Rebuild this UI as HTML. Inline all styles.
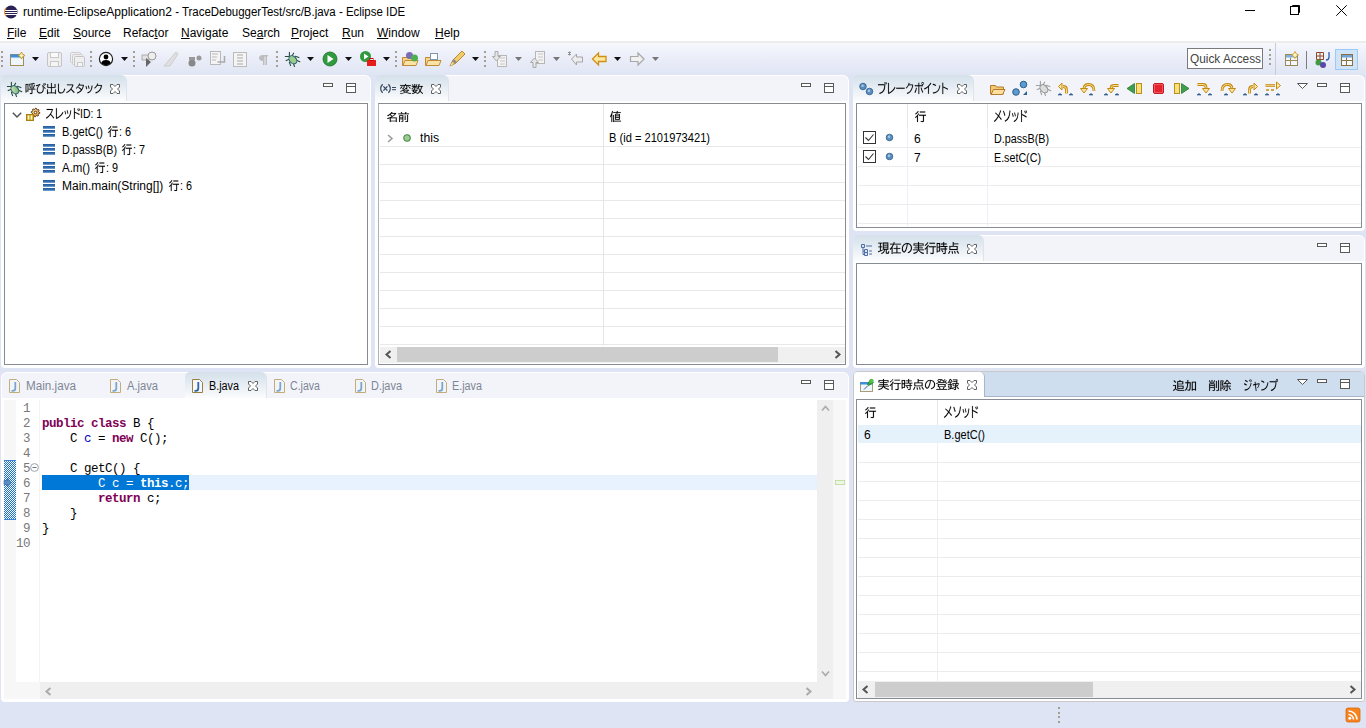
<!DOCTYPE html>
<html><head><meta charset="utf-8">
<style>
*{margin:0;padding:0;box-sizing:border-box}
html,body{width:1366px;height:728px;overflow:hidden}
body{position:relative;background:#dfe4f4;font-family:"Liberation Sans",sans-serif;font-size:12px;color:#000}
.a{position:absolute}
.t{position:absolute;white-space:pre}
u{text-decoration:underline}
.pn{position:absolute;background:#fff;border-radius:6px 6px 4px 4px}
.hd{position:absolute;left:1px;right:1px;top:1px;height:25px;background:#f3f4f9;border-radius:5px 5px 0 0}
.tab{position:absolute;top:0;height:26px;background:linear-gradient(#d4e0ea 0%,#e3ebf2 40%,#fbfcfd 100%);border-radius:5px 6px 0 0;border-right:1px solid #dfe3ea}
.cb{position:absolute;border:1px solid #878b93;background:#fff}
.gl{position:absolute;height:1px;background:#ededed}
.vl{position:absolute;width:1px;background:#ededed}
.code{position:absolute;font-family:"Liberation Mono",monospace;font-size:12.5px;letter-spacing:-0.5px;line-height:15px;white-space:pre;color:#000}
.k{color:#7f0055;font-weight:bold}
.f{color:#0000c0}
.ln{position:absolute;font-family:"Liberation Mono",monospace;font-size:12.5px;letter-spacing:-0.5px;line-height:15px;color:#787878;white-space:pre}
svg{position:absolute;overflow:visible}
</style></head><body>
<svg width="0" height="0" style="left:0;top:0">
<defs>
<path id="xcl" d="M0.5 0.5H3L5 2.5L7 0.5H9.5V3L7.5 5L9.5 7V9.5H7L5 7.5L3 9.5H0.5V7L2.5 5L0.5 3Z" fill="#fff" stroke="#505050" stroke-width="0.9"/>
<g id="mnx"><rect x="0.5" y="0.5" width="9" height="3" fill="#fff" stroke="#5a5a5a"/></g>
<g id="mxx"><rect x="0.5" y="0.5" width="9" height="9" fill="#fff" stroke="#5a5a5a"/><path d="M0.5 3.5h9" stroke="#5a5a5a"/></g>
<g id="jf"><path d="M0.5 0.5h7l3 3v10h-10z" fill="#f1f5fa" stroke="#c2ad78"/><path d="M6.3 3v6.2q0 2.6-2.6 2.6h-1.2" stroke="#7ea3cc" stroke-width="1.8" fill="none"/></g>
<g id="jfa"><path d="M0.5 0.5h7l3 3v10h-10z" fill="#f4f7fb" stroke="#9b7f3e"/><path d="M6.3 3v6.2q0 2.6-2.6 2.6h-1.2" stroke="#2f64a8" stroke-width="1.8" fill="none"/></g>
<linearGradient id="fg" x1="0" y1="0" x2="0" y2="1"><stop offset="0" stop-color="#1d5a9c"/><stop offset="0.6" stop-color="#3a72b0"/><stop offset="1" stop-color="#8fb1d8"/></linearGradient><g id="frame"><rect x="0" y="0" width="12" height="3" fill="url(#fg)"/><rect x="0" y="4" width="12" height="3" fill="url(#fg)"/><rect x="0" y="8" width="12" height="3" fill="url(#fg)"/></g>
<g id="chk"><rect x="0.5" y="0.5" width="12" height="12" fill="#fff" stroke="#333"/><path d="M2.5 6.5l3 3 5-6" stroke="#333" stroke-width="1.1" fill="none"/></g>
<g id="bdot"><circle cx="3.5" cy="3.5" r="3.3" fill="#5b8fc0" stroke="#2d5d8c" stroke-width="0.8"/><circle cx="3" cy="2.8" r="1.2" fill="#a8c8e6"/></g>
</defs>
</svg>

<!-- title bar -->
<div class="a" style="left:0;top:0;width:1366px;height:43px;background:#fff"></div>
<svg style="left:4px;top:5px" width="14" height="14" viewBox="0 0 14 14"><circle cx="7" cy="7" r="6.5" fill="#2c2255"/><rect x="1" y="5" width="12" height="1" fill="#fff"/><rect x="1" y="7" width="12" height="1" fill="#fff"/><rect x="1" y="9" width="12" height="1" fill="#fff"/><path d="M2 3 A6.5 6.5 0 0 0 2 11" stroke="#f7941e" stroke-width="1" fill="none"/></svg>
<div class="a" style="left:1245px;top:10px;width:10px;height:1px;background:#000"></div>
<svg style="left:1289px;top:3px" width="13" height="13"><rect x="1.5" y="3.5" width="8" height="8" fill="none" stroke="#000"/><path d="M3.5 3.5V2.5H10.5V9.5H9.5" fill="none" stroke="#000"/></svg>
<svg style="left:1336px;top:5px" width="11" height="11"><path d="M0.3 0.3L10.7 10.7M10.7 0.3L0.3 10.7" stroke="#000" stroke-width="1"/></svg>

<!-- toolbar -->
<div class="a" style="left:0;top:41px;width:1366px;height:2px;background:#ececec"></div>
<div class="a" style="left:0;top:43px;width:1366px;height:32px;background:linear-gradient(#f6f8fc,#eef1fa 30%,#e0e5f4)"></div>
<svg style="left:0;top:43px" width="1366" height="30" viewBox="0 43 1366 30">
<defs>
<g id="grip"><rect x="0" y="0" width="2" height="2" fill="#a69e8e"/><rect x="0" y="5" width="2" height="2" fill="#a69e8e"/><rect x="0" y="9" width="2" height="2" fill="#a69e8e"/><rect x="0" y="14" width="2" height="2" fill="#a69e8e"/></g>
<path id="dd" d="M0 0h7l-3.5 4z"/>
</defs>
<use href="#grip" x="1" y="51"/>
<!-- new -->
<rect x="10.5" y="54.5" width="13" height="11" fill="#eef6fd" stroke="#a58c53"/>
<rect x="10.5" y="54.5" width="13" height="3" fill="#3d8ed6"/>
<path d="M21.5 52 l1.2 2.3 2.3 1.2 -2.3 1.2 -1.2 2.3 -1.2 -2.3 -2.3 -1.2 2.3 -1.2z" fill="#fff3c4" stroke="#c79c2b" stroke-width="1"/>
<use href="#dd" x="32" y="57" fill="#111"/>
<!-- save -->
<rect x="47.5" y="52.5" width="14" height="14" rx="1.5" fill="#efefef" stroke="#c4c4c4"/>
<rect x="50.5" y="52.5" width="8" height="5" fill="#fafafa" stroke="#c8c8c8"/>
<rect x="50.5" y="61.5" width="8" height="5" fill="#f4f4f4" stroke="#c8c8c8"/>
<!-- save all -->
<rect x="70.5" y="52.5" width="10" height="10" rx="1" fill="#efefef" stroke="#cdcdcd"/>
<rect x="72.5" y="54.5" width="10" height="10" rx="1" fill="#efefef" stroke="#cdcdcd"/>
<rect x="74.5" y="56.5" width="10" height="10" rx="1" fill="#efefef" stroke="#c4c4c4"/>
<rect x="77.5" y="62.5" width="5" height="4" fill="#f4f4f4" stroke="#c8c8c8"/>
<use href="#grip" x="90" y="51"/>
<!-- profile -->
<circle cx="106" cy="59" r="6.6" fill="#fff" stroke="#222" stroke-width="1.2"/>
<circle cx="106" cy="57" r="2.4" fill="#000"/>
<path d="M101.2 63.3 Q102 60 106 60 Q110 60 110.8 63.3 Q106 67 101.2 63.3z" fill="#000"/>
<use href="#dd" x="121" y="57" fill="#111"/>
<use href="#grip" x="133" y="51"/>
<!-- disabled icons -->
<path d="M142 55h7v5h-7z" fill="#e2e2e2" stroke="#aaa"/>
<circle cx="152" cy="56" r="4" fill="#eee" stroke="#999"/>
<path d="M146 58v9l5-5z" fill="#666"/>
<path d="M164 66 L176 52 L178 54 L170 66z" fill="#e0e0e0" stroke="#ccc"/>
<circle cx="192" cy="63" r="3.5" fill="#888"/>
<path d="M189 57h6v3h-6z" fill="#999"/><circle cx="199" cy="58" r="2.5" fill="#999"/>
<rect x="210.5" y="51.5" width="10" height="13" fill="#f4f4f4" stroke="#b9b9b9"/>
<path d="M212 54h6M212 57h5M212 60h4" stroke="#bbb"/>
<path d="M224.5 56v6h-7" stroke="#aaa" stroke-width="1.5" fill="none"/>
<rect x="233.5" y="52.5" width="13" height="14" fill="#f4f4f4" stroke="#bbb"/>
<path d="M237 55h6M237 58h6M237 61h6M237 64h6" stroke="#aaa"/>
<path d="M263 55H268V56.5H267V65H265.5V56.5H264.5V65H263V61Q259 61 259 58Q259 55 263 55Z" fill="#bdbdbd"/>
<use href="#grip" x="276" y="51"/>
<!-- bug -->
<g transform="translate(285 52)">
<g stroke="#2b4a3c" stroke-width="1.1" stroke-linecap="round"><path d="M4.4 0.4V3.8M8.6 1.2L7.3 3.6M0.3 4.5H3.6M10.3 4.3L13.9 5.6M1.2 8.6L3.8 7.6M12.1 8.4L14.8 9.8M4.4 10.2L5.6 13.6M8.6 12.1L9.5 14.5"/></g>
<ellipse cx="7.9" cy="7.8" rx="3.3" ry="4.6" fill="#9ccb8c" stroke="#1d5b70" stroke-width="1" transform="rotate(-42 7.9 7.8)"/>
</g>
<use href="#dd" x="307" y="57" fill="#111"/>
<!-- run -->
<circle cx="330" cy="59" r="7" fill="#2f9a3e"/>
<circle cx="330" cy="59" r="7" fill="none" stroke="#1b6e2a" stroke-width="0.8"/>
<path d="M327.5 55v8l6-4z" fill="#fff"/>
<use href="#dd" x="345" y="57" fill="#111"/>
<!-- run ext -->
<circle cx="365.5" cy="56.5" r="5.5" fill="#2f9a3e"/>
<path d="M364 53.5v6l4.5-3z" fill="#fff"/>
<rect x="367" y="60" width="9" height="6" fill="#e51d1d"/>
<rect x="370" y="58.5" width="3" height="2" fill="none" stroke="#c00" />
<use href="#dd" x="383" y="57" fill="#111"/>
<use href="#grip" x="395" y="51"/>
<!-- open type -->
<path d="M402.5 57.5h5l1 1h6v7h-12z" fill="#f7d489" stroke="#c08a35"/>
<path d="M403 65.5l2-5h13l-2 5z" fill="#fbe3a6" stroke="#c08a35"/>
<circle cx="409.5" cy="55.5" r="3.5" fill="#7a6bb7"/>
<circle cx="414.5" cy="58" r="3.5" fill="#4fae50"/>
<!-- open folder -->
<path d="M425.5 57.5h5l1 1h6v7h-12z" fill="#f7d489" stroke="#c08a35"/>
<rect x="430.5" y="53.5" width="7" height="6" fill="#fff" stroke="#7f96b4"/>
<path d="M426 65.5l2-5h13l-2 5z" fill="#fbe3a6" stroke="#c08a35"/>
<!-- pen -->
<path d="M450 66 l3-6 9-9 3 3 -9 9z" fill="#f2cb6a" stroke="#b88830"/>
<path d="M453 60 l3 3" stroke="#8c8c8c" stroke-width="2.5"/>
<path d="M450 66l2-3 1 1z" fill="#fff8d0"/>
<use href="#dd" x="472" y="57" fill="#111"/>
<use href="#grip" x="484" y="51"/>
<!-- down to list -->
<rect x="497.5" y="55.5" width="9" height="11" fill="#f3f3f3" stroke="#b7b7b7"/>
<path d="M500 58h5M500 61h5M500 64h5" stroke="#c6c6c6"/>
<path d="M495 51.5h3v5h2.5l-4 4.5-4-4.5h2.5z" fill="#e6e6e6" stroke="#a9a9a9"/>
<use href="#dd" x="515" y="57" fill="#777"/>
<rect x="535.5" y="51.5" width="9" height="12" fill="#f3f3f3" stroke="#b7b7b7"/>
<path d="M538 54h5M538 57h5M538 60h5" stroke="#c6c6c6"/>
<path d="M533 67.5h3v-5h2.5l-4-4.5-4 4.5h2.5z" fill="#e6e6e6" stroke="#a9a9a9"/>
<use href="#dd" x="553" y="57" fill="#777"/>
<!-- back with star -->
<path d="M571.5 59l5-5v3h6v5h-6v3z" fill="#ededed" stroke="#a5a5a5"/>
<path d="M568 52l3 3M571 52l-3 3M569.5 51.5v4" stroke="#888" stroke-width="0.9"/>
<!-- back gold -->
<path d="M592.5 59l6-6v3.5h7.5v5h-7.5v3.5z" fill="#fde8a1" stroke="#d18f12" stroke-width="1.3"/>
<use href="#dd" x="614" y="57" fill="#111"/>
<!-- forward gray -->
<path d="M644 59l-6-6v3.5h-7.5v5h7.5v3.5z" fill="#f1f1f1" stroke="#a8a8a8" stroke-width="1.2"/>
<use href="#dd" x="652" y="57" fill="#777"/>
<!-- right side -->
<rect x="1187.5" y="48.5" width="75" height="20" fill="#fff" stroke="#7a7a7a"/>
<use href="#grip" x="1269" y="49"/>
<rect x="1275" y="43" width="1" height="32" fill="#c9ccd6"/>
<rect x="1285.5" y="54.5" width="12" height="11" fill="#f4f7fb" stroke="#9a8a5a"/>
<rect x="1286" y="55" width="11" height="2.5" fill="#7fb0e0"/>
<path d="M1285.5 60.5h12M1290.5 57.5v8" stroke="#9a8a5a"/>
<path d="M1295 51.5l1.3 2.2 2.2 1.3-2.2 1.3-1.3 2.2-1.3-2.2-2.2-1.3 2.2-1.3z" fill="#fff3c4" stroke="#c89a2c" stroke-width="0.9"/>
<rect x="1306" y="51" width="1" height="18" fill="#7c7c7c"/>
<path d="M1316.5 52.5h7v7h-7z M1320 52.5v7 M1316.5 56h7" stroke="#8b4a2a" fill="none" stroke-width="1"/>
<circle cx="1318.5" cy="62.5" r="3" fill="#3f9a45"/><circle cx="1323" cy="65" r="3" fill="#5a48a8"/>
<path d="M1329 52v5q0 3-3 3" stroke="#2b5fb0" stroke-width="1.3" fill="none"/>
<rect x="1335.5" y="49.5" width="22" height="20" fill="#cfe4f9" stroke="#9ccaf2"/>
<rect x="1341.5" y="54.5" width="11" height="11" fill="#f6f9fc" stroke="#8a7040"/>
<rect x="1342" y="55" width="10" height="2.5" fill="#6fa3da"/>
<path d="M1341.5 60.5h11M1346.5 57.5v8" stroke="#8a7040"/>
</svg>

<!-- ===== Call stack panel ===== -->
<div class="pn" style="left:1px;top:75px;width:370px;height:293px">
  <div class="hd"></div>
  <div class="tab" style="left:0;width:126px"></div>
  <div class="cb" style="left:3px;top:28px;width:364px;height:262px"></div>
</div>
<svg style="left:7px;top:82px" width="16" height="16" viewBox="0 0 16 16">
<defs><linearGradient id="bugg" x1="0" y1="0" x2="1" y2="1"><stop offset="0" stop-color="#d8efcb"/><stop offset="1" stop-color="#6fa85e"/></linearGradient></defs>
<g stroke="#2b4a3c" stroke-width="1.1" stroke-linecap="round"><path d="M4.4 0.4V3.8M8.6 1.2L7.3 3.6M0.3 4.5H3.6M10.3 4.3L13.9 5.6M1.2 8.6L3.8 7.6M12.1 8.4L14.8 9.8M4.4 10.2L5.6 13.6M8.6 12.1L9.5 14.5"/></g>
<ellipse cx="7.9" cy="7.8" rx="3.3" ry="4.6" fill="url(#bugg)" stroke="#1d5b70" stroke-width="1" transform="rotate(-42 7.9 7.8)"/>
</svg>
<svg style="left:110px;top:84px" width="10" height="10"><use href="#xcl"/></svg>
<svg style="left:323px;top:83px" width="11" height="5"><use href="#mnx"/></svg>
<svg style="left:346px;top:83px" width="11" height="11"><use href="#mxx"/></svg>
<svg style="left:12px;top:112px" width="10" height="6"><path d="M0.8 0.8l4.2 4.2 4.2-4.2" stroke="#555" stroke-width="1.5" fill="none"/></svg>
<svg style="left:26px;top:107px" width="15" height="15">
<defs><linearGradient id="gg" x1="0" y1="0" x2="1" y2="1"><stop offset="0" stop-color="#fff2a0"/><stop offset="1" stop-color="#f0a020"/></linearGradient></defs>
<path d="M9.50 1.20 L10.34 1.28 L10.72 2.54 L11.28 2.84 L12.54 2.46 L13.08 3.11 L12.46 4.28 L12.64 4.88 L13.80 5.50 L13.72 6.34 L12.46 6.72 L12.16 7.28 L12.54 8.54 L11.89 9.08 L10.72 8.46 L10.12 8.64 L9.50 9.80 L8.66 9.72 L8.28 8.46 L7.72 8.16 L6.46 8.54 L5.92 7.89 L6.54 6.72 L6.36 6.12 L5.20 5.50 L5.28 4.66 L6.54 4.28 L6.84 3.72 L6.46 2.46 L7.11 1.92 L8.28 2.54 L8.88 2.36Z" fill="url(#gg)" stroke="#4a2414" stroke-width="0.9"/>
<circle cx="9.5" cy="5.5" r="1.3" fill="#fff" stroke="#4a2414" stroke-width="0.9"/>
<rect x="0.5" y="7.5" width="7" height="6" fill="#c49a1c" stroke="#a8800e"/>
<rect x="1.6" y="8.4" width="1.8" height="4.2" fill="#fff6c0"/><rect x="4.6" y="8.4" width="1.8" height="4.2" fill="#fff6c0"/>
</svg>
<svg style="left:43px;top:126px" width="13" height="13"><use href="#frame"/></svg>
<svg style="left:43px;top:144px" width="13" height="13"><use href="#frame"/></svg>
<svg style="left:43px;top:162px" width="13" height="13"><use href="#frame"/></svg>
<svg style="left:43px;top:180px" width="13" height="13"><use href="#frame"/></svg>

<!-- ===== Variables panel ===== -->
<div class="pn" style="left:375px;top:75px;width:474px;height:293px">
  <div class="hd"></div>
  <div class="tab" style="left:0;width:74px"></div>
  <div class="cb" style="left:3px;top:28px;width:468px;height:262px;border-left-color:#adb0b7"></div>
</div>
<div class='a' style='left:603px;top:104px;width:1px;height:242px;background:#e6e6e6;'></div>
<div class='a' style='left:380px;top:146px;width:465px;height:1px;background:#e8e8e8;'></div>
<div class='a' style='left:380px;top:164px;width:465px;height:1px;background:#e8e8e8;'></div>
<div class='a' style='left:380px;top:182px;width:465px;height:1px;background:#e8e8e8;'></div>
<div class='a' style='left:380px;top:200px;width:465px;height:1px;background:#e8e8e8;'></div>
<div class='a' style='left:380px;top:218px;width:465px;height:1px;background:#e8e8e8;'></div>
<div class='a' style='left:380px;top:236px;width:465px;height:1px;background:#e8e8e8;'></div>
<div class='a' style='left:380px;top:254px;width:465px;height:1px;background:#e8e8e8;'></div>
<div class='a' style='left:380px;top:272px;width:465px;height:1px;background:#e8e8e8;'></div>
<div class='a' style='left:380px;top:290px;width:465px;height:1px;background:#e8e8e8;'></div>
<div class='a' style='left:380px;top:308px;width:465px;height:1px;background:#e8e8e8;'></div>
<div class='a' style='left:380px;top:326px;width:465px;height:1px;background:#e8e8e8;'></div>
<div class='a' style='left:380px;top:344px;width:465px;height:1px;background:#e8e8e8;'></div>
<div class='a' style='left:380px;top:347px;width:465px;height:16px;background:#f0f0f0;'></div>
<div class='a' style='left:397px;top:347px;width:381px;height:15px;background:#cdcdcd;'></div>
<svg style='left:385px;top:350px' width='7' height='9'><path d='M5.5 1l-4 3.5 4 3.5' stroke='#555' stroke-width='2' fill='none'/></svg>
<svg style='left:834px;top:350px' width='7' height='9'><path d='M1.5 1l4 3.5-4 3.5' stroke='#555' stroke-width='2' fill='none'/></svg>
<svg style="left:0;top:0" width="1" height="1"><g stroke="#34455f" fill="none"><path d="M382.6 84.2Q378.6 88.5 382.6 92.8" stroke-width="1.25"/><path d="M388.4 84.2Q392.4 88.5 388.4 92.8" stroke-width="1.25"/><path d="M383.4 86.3L387.4 90.7M387.4 86.3L383.4 90.7" stroke-width="1.25"/><path d="M392 87.5h4M392 89.7h4" stroke-width="1"/></g></svg>
<svg style="left:431px;top:84px" width="10" height="10"><use href="#xcl"/></svg>
<svg style="left:801px;top:83px" width="11" height="5"><use href="#mnx"/></svg>
<svg style="left:824px;top:83px" width="11" height="11"><use href="#mxx"/></svg>
<svg style="left:387px;top:134px" width="7" height="9"><path d="M1 1l4 3.5-4 3.5" stroke="#9a9a9a" stroke-width="1.5" fill="none"/></svg>
<svg style="left:403px;top:134px" width="8" height="8"><circle cx="4" cy="4" r="3.2" fill="#9fcc8f" stroke="#3d8a46" stroke-width="1.1"/></svg>

<!-- ===== Breakpoints panel ===== -->
<div class="pn" style="left:853px;top:75px;width:512px;height:156px">
  <div class="hd"></div>
  <div class="tab" style="left:0;width:121px"></div>
  <div class="cb" style="left:3px;top:28px;width:506px;height:125px"></div>
</div>
<div class='a' style='left:907px;top:104px;width:1px;height:24px;background:#e6e6e6;'></div>
<div class='a' style='left:987px;top:104px;width:1px;height:24px;background:#e6e6e6;'></div>
<div class='a' style='left:907px;top:128px;width:1px;height:98px;background:#e9f0f8;'></div>
<div class='a' style='left:987px;top:128px;width:1px;height:98px;background:#e9f0f8;'></div>
<div class='a' style='left:858px;top:147px;width:503px;height:1px;background:#ececec;'></div>
<div class='a' style='left:858px;top:166px;width:503px;height:1px;background:#ececec;'></div>
<div class='a' style='left:858px;top:185px;width:503px;height:1px;background:#ececec;'></div>
<div class='a' style='left:858px;top:204px;width:503px;height:1px;background:#ececec;'></div>
<div class='a' style='left:858px;top:223px;width:503px;height:1px;background:#ececec;'></div>
<svg style="left:859px;top:82px" width="15" height="14"><use href="#bdot" x="0" y="0" transform="translate(0.5 1)"/><use href="#bdot" transform="translate(7 6)"/></svg>
<svg style="left:957px;top:84px" width="10" height="10"><use href="#xcl"/></svg>
<svg style='left:0;top:0' width='1366' height='728'><path d='M990.5 85.5h5l1 1.5h7v7h-13z' fill='#f3c874' stroke='#b47c2a'/><path d='M991 94.5l2.5-5h11.5l-2.5 5z' fill='#fbe0a0' stroke='#b47c2a'/><circle cx='1023.5' cy='84.5' r='3.3' fill='#5b9bd0' stroke='#2c5f8e'/><circle cx='1016' cy='92' r='3.3' fill='#5b9bd0' stroke='#2c5f8e'/><path d='M1027 91v4h-4z' fill='#2c5f8e'/><g transform='translate(1036 81)'><g stroke='#a0a0a0' stroke-width='1.1' stroke-linecap='round'><path d='M4.4 0.4V3.8M8.6 1.2L7.3 3.6M0.3 4.5H3.6M10.3 4.3L13.9 5.6M1.2 8.6L3.8 7.6M12.1 8.4L14.8 9.8M4.4 10.2L5.6 13.6M8.6 12.1L9.5 14.5'/></g><ellipse cx='7.9' cy='7.8' rx='3.3' ry='4.6' fill='#dcdcdc' stroke='#8c8c8c' stroke-width='1' transform='rotate(-42 7.9 7.8)'/></g><path d='M1066.5 93.5V89.5Q1066.5 86.5 1063 86.5' stroke='#c58a12' stroke-width='2.8' fill='none' stroke-linejoin='round'/><path d='M1066.5 93.5V89.5Q1066.5 86.5 1063 86.5' stroke='#fde7a0' stroke-width='0.9' fill='none' stroke-linejoin='round'/><path d='M1058.5 86.5l3.5-3.5v7z' fill='#fde7a0' stroke='#c58a12' stroke-width='1' stroke-linejoin='round'/><path d='M1058 95q2-3 4 0z' fill='#2f5b8c' stroke='#2f5b8c' stroke-width='0.6'/><path d='M1069 95q2-3 4 0z' fill='#2f5b8c' stroke='#2f5b8c' stroke-width='0.6'/><path d='M1094 91Q1094 84.5 1088.5 84.5Q1084 84.5 1084 89' stroke='#c58a12' stroke-width='2.8' fill='none' stroke-linejoin='round'/><path d='M1094 91Q1094 84.5 1088.5 84.5Q1084 84.5 1084 89' stroke='#fde7a0' stroke-width='0.9' fill='none' stroke-linejoin='round'/><path d='M1080.5 88.5h7l-3.5 4.5z' fill='#fde7a0' stroke='#c58a12' stroke-width='1' stroke-linejoin='round'/><path d='M1089 95q2-3 4 0z' fill='#2f5b8c' stroke='#2f5b8c' stroke-width='0.6'/><path d='M1118.5 85.5H1114Q1111 85.5 1111 88.5V89' stroke='#c58a12' stroke-width='2.8' fill='none' stroke-linejoin='round'/><path d='M1118.5 85.5H1114Q1111 85.5 1111 88.5V89' stroke='#fde7a0' stroke-width='0.9' fill='none' stroke-linejoin='round'/><path d='M1107.5 88.5h7l-3.5 4.5z' fill='#fde7a0' stroke='#c58a12' stroke-width='1' stroke-linejoin='round'/><path d='M1104 95q2-3 4 0z' fill='#2f5b8c' stroke='#2f5b8c' stroke-width='0.6'/><path d='M1115 95q2-3 4 0z' fill='#2f5b8c' stroke='#2f5b8c' stroke-width='0.6'/><path d='M1127 88.5l7.5-5v10z' fill='#3e9f4a' stroke='#2a7a35' stroke-width='0.8'/><rect x='1136.5' y='83.5' width='5' height='10' fill='#fbe07a' stroke='#b8901e'/><rect x='1153.5' y='83.5' width='10' height='10' rx='1.5' fill='#e5222d' stroke='#c21a24'/><rect x='1154.5' y='84.5' width='8' height='8' fill='none' stroke='#f46d74' stroke-width='0.7'/><rect x='1174.5' y='83.5' width='5' height='10' fill='#fbe07a' stroke='#b8901e'/><path d='M1181.5 83.5l7.5 5-7.5 5z' fill='#3e9f4a' stroke='#2a7a35' stroke-width='0.8'/><path d='M1197.5 84.5H1203Q1206 84.5 1206 87.5V89' stroke='#c58a12' stroke-width='2.8' fill='none' stroke-linejoin='round'/><path d='M1197.5 84.5H1203Q1206 84.5 1206 87.5V89' stroke='#fde7a0' stroke-width='0.9' fill='none' stroke-linejoin='round'/><path d='M1202.5 88.5h7l-3.5 4.5z' fill='#fde7a0' stroke='#c58a12' stroke-width='1' stroke-linejoin='round'/><path d='M1197 95q2-3 4 0z' fill='#2f5b8c' stroke='#2f5b8c' stroke-width='0.6'/><path d='M1208 95q2-3 4 0z' fill='#2f5b8c' stroke='#2f5b8c' stroke-width='0.6'/><path d='M1222 91Q1222 84.5 1227.5 84.5Q1232 84.5 1232 89' stroke='#c58a12' stroke-width='2.8' fill='none' stroke-linejoin='round'/><path d='M1222 91Q1222 84.5 1227.5 84.5Q1232 84.5 1232 89' stroke='#fde7a0' stroke-width='0.9' fill='none' stroke-linejoin='round'/><path d='M1228.5 88.5h7l-3.5 4.5z' fill='#fde7a0' stroke='#c58a12' stroke-width='1' stroke-linejoin='round'/><path d='M1224 95q2-3 4 0z' fill='#2f5b8c' stroke='#2f5b8c' stroke-width='0.6'/><path d='M1249.5 93.5V89.5Q1249.5 86.5 1253 86.5' stroke='#c58a12' stroke-width='2.8' fill='none' stroke-linejoin='round'/><path d='M1249.5 93.5V89.5Q1249.5 86.5 1253 86.5' stroke='#fde7a0' stroke-width='0.9' fill='none' stroke-linejoin='round'/><path d='M1257.5 86.5l-3.5-3.5v7z' fill='#fde7a0' stroke='#c58a12' stroke-width='1' stroke-linejoin='round'/><path d='M1243 95q2-3 4 0z' fill='#2f5b8c' stroke='#2f5b8c' stroke-width='0.6'/><path d='M1254 95q2-3 4 0z' fill='#2f5b8c' stroke='#2f5b8c' stroke-width='0.6'/><path d='M1265.5 85.5H1275' stroke='#c58a12' stroke-width='2.6' fill='none' stroke-linejoin='round'/><path d='M1265.5 85.5H1275' stroke='#fde7a0' stroke-width='0.7' fill='none' stroke-linejoin='round'/><path d='M1280.5 85.5l-4-3.5v7z' fill='#fde7a0' stroke='#c58a12' stroke-width='1' stroke-linejoin='round'/><path d='M1266 90h3M1271 90h3' stroke='#c58a12' stroke-width='1.6'/><path d='M1265 95q2-3 4 0z' fill='#2f5b8c' stroke='#2f5b8c' stroke-width='0.6'/><path d='M1276 95q2-3 4 0z' fill='#2f5b8c' stroke='#2f5b8c' stroke-width='0.6'/></svg>
<svg style="left:1297px;top:83px" width="11" height="6"><path d="M0.5 0.5h10l-5 5z" fill="#fff" stroke="#555"/></svg>
<svg style="left:1317px;top:83px" width="11" height="5"><use href="#mnx"/></svg>
<svg style="left:1340px;top:83px" width="11" height="11"><use href="#mxx"/></svg>
<svg style="left:863px;top:131px" width="13" height="13"><use href="#chk"/></svg>
<svg style="left:863px;top:150px" width="13" height="13"><use href="#chk"/></svg>
<svg style="left:886px;top:134px" width="8" height="8"><use href="#bdot"/></svg>
<svg style="left:886px;top:153px" width="8" height="8"><use href="#bdot"/></svg>

<!-- ===== Current exec point panel ===== -->
<div class="pn" style="left:853px;top:235px;width:512px;height:133px">
  <div class="hd"></div>
  <div class="tab" style="left:0;width:131px"></div>
  <div class="cb" style="left:3px;top:28px;width:506px;height:102px"></div>
</div>
<svg style="left:861px;top:244px" width="12" height="12"><path d="M0.5 0.5h3v3h-3zM3.5 5.5h3v3h-3zM3.5 8.5h3v3h-3z" fill="#d9e3f0" stroke="#4f6fa5"/><path d="M2 3.5v7h1.5M2 7h1.5M5 2h6M8 7h3M8 10h3" stroke="#4f6fa5" fill="none"/></svg>
<svg style="left:967px;top:244px" width="10" height="10"><use href="#xcl"/></svg>
<svg style="left:1317px;top:243px" width="11" height="5"><use href="#mnx"/></svg>
<svg style="left:1340px;top:243px" width="11" height="11"><use href="#mxx"/></svg>

<!-- ===== Editor panel ===== -->
<div class="pn" style="left:1px;top:372px;width:848px;height:330px">
  <div class="hd" style="height:25px"></div>
  <div class="tab" style="left:184px;width:82px;height:26px"></div>
</div>
<svg style='left:9px;top:379px' width='11' height='14'><use href='#jf'/></svg>
<svg style='left:110px;top:379px' width='11' height='14'><use href='#jf'/></svg>
<svg style='left:274px;top:379px' width='11' height='14'><use href='#jf'/></svg>
<svg style='left:355px;top:379px' width='11' height='14'><use href='#jf'/></svg>
<svg style='left:436px;top:379px' width='11' height='14'><use href='#jf'/></svg>
<svg style='left:192px;top:379px' width='11' height='14'><use href='#jfa'/></svg>
<svg style='left:248px;top:381px' width='10' height='10'><use href='#xcl'/></svg>
<svg style='left:801px;top:380px' width='11' height='5'><use href='#mnx'/></svg>
<svg style='left:824px;top:380px' width='11' height='11'><use href='#mxx'/></svg>
<div class='a' style='left:4px;top:400px;width:12px;height:299px;background:#f7f7f7;'></div>
<div class='a' style='left:39px;top:400px;width:1px;height:282px;background:#f3f3f3;'></div>
<div class='a' style='left:16px;top:682px;width:24px;height:17px;background:#f7f7f7;'></div>
<div class='a' style='left:4px;top:460px;width:12px;height:60px;background:#0a6fd0;background:repeating-conic-gradient(#1a73d0 0 25%,#ffffff 0 50%) 0 0/2px 2px;'></div>
<div class='a' style='left:4px;top:460px;width:12px;height:1px;background:#3b86d6;'></div>
<div class='a' style='left:4px;top:519px;width:12px;height:1px;background:#3b86d6;'></div>
<svg style='left:4px;top:478px' width='8' height='9'><path d='M0 2.5h3.5v-2.5l4 4.5-4 4.5v-2.5h-3.5z' fill='#5a8cc4' stroke='#2e5f96' stroke-width='0.6'/></svg>
<svg style='left:30px;top:463px' width='9' height='9'><circle cx='4.5' cy='4.5' r='3.9' fill='#fff' stroke='#9aa3ad' stroke-width='1'/><path d='M2.5 4.5h4' stroke='#6d747c' stroke-width='1'/></svg>
<div class='a' style='left:189px;top:475px;width:628px;height:15px;background:#e8f2fe;'></div>
<div class='a' style='left:42px;top:475px;width:147px;height:15px;background:#0078d7;'></div>
<div class='a' style='left:817px;top:400px;width:16px;height:282px;background:#efefef;'></div>
<div class='a' style='left:833px;top:400px;width:13px;height:299px;background:#f7f7f7;'></div>
<svg style='left:821px;top:405px' width='9' height='7'><path d='M1 5.5l3.5-4 3.5 4' stroke='#aaa' stroke-width='1.6' fill='none'/></svg>
<svg style='left:821px;top:670px' width='9' height='7'><path d='M1 1.5l3.5 4 3.5-4' stroke='#aaa' stroke-width='1.6' fill='none'/></svg>
<div class='a' style='left:835px;top:480px;width:10px;height:5px;background:#fff;border:1px solid #c3e0a8;background:#eef7e6'></div>
<div class='a' style='left:40px;top:682px;width:793px;height:17px;background:#efefef;'></div>
<svg style='left:45px;top:687px' width='7' height='9'><path d='M5.5 1l-4 3.5 4 3.5' stroke='#aaa' stroke-width='2' fill='none'/></svg>
<svg style='left:805px;top:687px' width='7' height='9'><path d='M1.5 1l4 3.5-4 3.5' stroke='#aaa' stroke-width='2' fill='none'/></svg>
<div class='ln' style='left:23px;top:402px'>1</div>
<div class='ln' style='left:23px;top:417px'>2</div>
<div class='ln' style='left:23px;top:432px'>3</div>
<div class='ln' style='left:23px;top:447px'>4</div>
<div class='ln' style='left:23px;top:462px'>5</div>
<div class='ln' style='left:23px;top:477px'>6</div>
<div class='ln' style='left:23px;top:492px'>7</div>
<div class='ln' style='left:23px;top:507px'>8</div>
<div class='ln' style='left:23px;top:522px'>9</div>
<div class='ln' style='left:16px;top:537px'>10</div>
<div class='code' style='left:42px;top:417px;'><span class='k'>public</span> <span class='k'>class</span> B {</div>
<div class='code' style='left:42px;top:432px;'>    C <span class='f'>c</span> = <span class='k'>new</span> C();</div>
<div class='code' style='left:42px;top:462px;'>    C getC() {</div>
<div class='code' style='left:42px;top:477px;color:#fff;'>        C c = <b style='font-weight:bold'>this</b>.c;</div>
<div class='code' style='left:42px;top:492px;'>        <span class='k'>return</span> c;</div>
<div class='code' style='left:42px;top:507px;'>    }</div>
<div class='code' style='left:42px;top:522px;'>}</div>

<!-- ===== Registration panel ===== -->
<div class="pn" style="left:853px;top:371px;width:512px;height:331px;border:1px solid #c9c9c9;border-radius:5px 5px 3px 3px">
  <div class="a" style="left:0;right:0;top:0;height:25px;background:#cfdeee;border-bottom:1px solid #aab6c7;border-radius:4px 4px 0 0"></div>
  <div class="a" style="left:0;top:0;width:131px;height:25px;background:#fff;border-right:1px solid #aab6c7;border-radius:4px 5px 0 0"></div>
  <div class="cb" style="left:2px;top:27px;width:506px;height:300px"></div>
</div>
<div class='a' style='left:858px;top:425px;width:503px;height:18px;background:#e5f1fb;'></div>
<div class='a' style='left:937px;top:400px;width:1px;height:25px;background:#e6e6e6;'></div>
<div class='a' style='left:937px;top:425px;width:1px;height:256px;background:#e9f0f8;'></div>
<div class='a' style='left:858px;top:462px;width:503px;height:1px;background:#ececec;'></div>
<div class='a' style='left:858px;top:481px;width:503px;height:1px;background:#ececec;'></div>
<div class='a' style='left:858px;top:500px;width:503px;height:1px;background:#ececec;'></div>
<div class='a' style='left:858px;top:519px;width:503px;height:1px;background:#ececec;'></div>
<div class='a' style='left:858px;top:538px;width:503px;height:1px;background:#ececec;'></div>
<div class='a' style='left:858px;top:557px;width:503px;height:1px;background:#ececec;'></div>
<div class='a' style='left:858px;top:576px;width:503px;height:1px;background:#ececec;'></div>
<div class='a' style='left:858px;top:595px;width:503px;height:1px;background:#ececec;'></div>
<div class='a' style='left:858px;top:614px;width:503px;height:1px;background:#ececec;'></div>
<div class='a' style='left:858px;top:633px;width:503px;height:1px;background:#ececec;'></div>
<div class='a' style='left:858px;top:652px;width:503px;height:1px;background:#ececec;'></div>
<div class='a' style='left:858px;top:671px;width:503px;height:1px;background:#ececec;'></div>
<div class='a' style='left:858px;top:681px;width:503px;height:17px;background:#f0f0f0;'></div>
<div class='a' style='left:875px;top:682px;width:218px;height:15px;background:#cdcdcd;'></div>
<svg style='left:862px;top:685px' width='7' height='9'><path d='M5.5 1l-4 3.5 4 3.5' stroke='#555' stroke-width='2' fill='none'/></svg>
<svg style='left:1349px;top:685px' width='7' height='9'><path d='M1.5 1l4 3.5-4 3.5' stroke='#555' stroke-width='2' fill='none'/></svg>
<svg style="left:859px;top:378px" width="16" height="16"><rect x="1.5" y="4.5" width="12" height="9" fill="#eef6fd" stroke="#a89c7a"/><rect x="1" y="4" width="13" height="2.5" fill="#3f8fd8"/><path d="M5 11.5l4-4" stroke="#4a5a8a" stroke-width="1"/><path d="M8.5 6.5l3-5 3 3-5 3z" fill="#3da83a" stroke="#1f7a1f" stroke-width="0.8"/><circle cx="12.5" cy="3" r="2.2" fill="#55c050"/></svg>
<svg style="left:967px;top:380px" width="10" height="10"><use href="#xcl"/></svg>
<svg style="left:1297px;top:379px" width="11" height="6"><path d="M0.5 0.5h10l-5 5z" fill="#fff" stroke="#555"/></svg>
<svg style="left:1317px;top:379px" width="11" height="5"><use href="#mnx"/></svg>
<svg style="left:1340px;top:379px" width="11" height="11"><use href="#mxx"/></svg>

<!-- status bar -->
<svg style="left:1058px;top:707px" width="2" height="16"><rect y="0" width="2" height="2" fill="#a69e8e"/><rect y="5" width="2" height="2" fill="#a69e8e"/><rect y="9" width="2" height="2" fill="#a69e8e"/><rect y="14" width="2" height="2" fill="#a69e8e"/></svg>
<svg style="left:1346px;top:708px" width="14" height="14"><rect x="0" y="0" width="14" height="14" rx="2" fill="#f7831f" stroke="#d86a0e" stroke-width="0.8"/><circle cx="3.8" cy="10.2" r="1.5" fill="#fff"/><path d="M2.5 6.5a5 5 0 0 1 5 5M2.5 3a8.5 8.5 0 0 1 8.5 8.5" stroke="#fff" stroke-width="1.6" fill="none"/></svg>

<div class='t' style='left:23px;top:6px;font-size:12px;line-height:12px;transform:scaleX(1.006);transform-origin:0 0;'>runtime-EclipseApplication2</div>
<div class='t' style='left:172px;top:6px;font-size:12px;line-height:12px;transform:scaleX(0.955);transform-origin:0 0;'> - TraceDebuggerTest/src/B.java - Eclipse IDE</div>
<div class='t' style='left:7px;top:27px;font-size:12px;line-height:12px;'><u>F</u>ile</div>
<div class='t' style='left:39px;top:27px;font-size:12px;line-height:12px;'><u>E</u>dit</div>
<div class='t' style='left:73px;top:27px;font-size:12px;line-height:12px;'><u>S</u>ource</div>
<div class='t' style='left:123px;top:27px;font-size:12px;line-height:12px;'>Refac<u>t</u>or</div>
<div class='t' style='left:181px;top:27px;font-size:12px;line-height:12px;'><u>N</u>avigate</div>
<div class='t' style='left:242px;top:27px;font-size:12px;line-height:12px;'>Se<u>a</u>rch</div>
<div class='t' style='left:291px;top:27px;font-size:12px;line-height:12px;'><u>P</u>roject</div>
<div class='t' style='left:342px;top:27px;font-size:12px;line-height:12px;'><u>R</u>un</div>
<div class='t' style='left:377px;top:27px;font-size:12px;line-height:12px;'><u>W</u>indow</div>
<div class='t' style='left:435px;top:27px;font-size:12px;line-height:12px;'><u>H</u>elp</div>
<div class='t' style='left:1190px;top:53px;font-size:12px;line-height:12px;transform:scaleX(0.986);transform-origin:0 0;color:#444'>Quick Access</div>
<div class='t' style='left:80px;top:108px;font-size:12px;line-height:12px;transform:scaleX(0.868);transform-origin:0 0;'>ID: 1</div>
<div class='t' style='left:62px;top:126px;font-size:12px;line-height:12px;transform:scaleX(0.917);transform-origin:0 0;'>B.getC()</div>
<div class='t' style='left:119px;top:126px;font-size:12px;line-height:12px;transform:scaleX(0.899);transform-origin:0 0;'>: 6</div>
<div class='t' style='left:62px;top:144px;font-size:12px;line-height:12px;transform:scaleX(0.896);transform-origin:0 0;'>D.passB(B)</div>
<div class='t' style='left:133px;top:144px;font-size:12px;line-height:12px;transform:scaleX(0.899);transform-origin:0 0;'>: 7</div>
<div class='t' style='left:62px;top:162px;font-size:12px;line-height:12px;transform:scaleX(0.955);transform-origin:0 0;'>A.m()</div>
<div class='t' style='left:106px;top:162px;font-size:12px;line-height:12px;transform:scaleX(0.899);transform-origin:0 0;'>: 9</div>
<div class='t' style='left:62px;top:180px;font-size:12px;line-height:12px;'>Main.main(String[])</div>
<div class='t' style='left:180px;top:180px;font-size:12px;line-height:12px;transform:scaleX(0.899);transform-origin:0 0;'>: 6</div>
<div class='t' style='left:420px;top:132px;font-size:12px;line-height:12px;transform:scaleX(1.017);transform-origin:0 0;'>this</div>
<div class='t' style='left:609px;top:132px;font-size:12px;line-height:12px;transform:scaleX(0.926);transform-origin:0 0;'>B (id = 2101973421)</div>
<div class='t' style='left:914px;top:133px;font-size:12px;line-height:12px;'>6</div>
<div class='t' style='left:994px;top:133px;font-size:12px;line-height:12px;transform:scaleX(0.896);transform-origin:0 0;'>D.passB(B)</div>
<div class='t' style='left:914px;top:152px;font-size:12px;line-height:12px;'>7</div>
<div class='t' style='left:994px;top:152px;font-size:12px;line-height:12px;transform:scaleX(0.892);transform-origin:0 0;'>E.setC(C)</div>
<div class='t' style='left:26px;top:380px;font-size:12px;line-height:12px;transform:scaleX(0.974);transform-origin:0 0;color:#7d8696'>Main.java</div>
<div class='t' style='left:127px;top:380px;font-size:12px;line-height:12px;transform:scaleX(0.929);transform-origin:0 0;color:#7d8696'>A.java</div>
<div class='t' style='left:209px;top:380px;font-size:12px;line-height:12px;transform:scaleX(0.899);transform-origin:0 0;'>B.java</div>
<div class='t' style='left:290px;top:380px;font-size:12px;line-height:12px;transform:scaleX(0.882);transform-origin:0 0;color:#7d8696'>C.java</div>
<div class='t' style='left:371px;top:380px;font-size:12px;line-height:12px;transform:scaleX(0.911);transform-origin:0 0;color:#7d8696'>D.java</div>
<div class='t' style='left:452px;top:380px;font-size:12px;line-height:12px;transform:scaleX(0.899);transform-origin:0 0;color:#7d8696'>E.java</div>
<div class='t' style='left:864px;top:429px;font-size:12px;line-height:12px;'>6</div>
<div class='t' style='left:944px;top:429px;font-size:12px;line-height:12px;transform:scaleX(0.917);transform-origin:0 0;'>B.getC()</div>
<svg style='left:0;top:0' width='1366' height='728'><path d='M28.35 83.92V91.47H26.33V92.44H25.6V83.92ZM26.33 84.73V90.66H27.64V84.73ZM32.41 84.21V88.81H35.34V89.6H32.41V93.03Q32.41 93.59 32.17 93.81Q31.97 93.99 31.42 93.99Q30.64 93.99 30.02 93.92L29.84 93.03Q30.58 93.15 31.22 93.15Q31.5 93.15 31.56 93.05Q31.6 92.98 31.6 92.77V89.6H28.63V88.81H31.6V84.34L31.41 84.37Q30.34 84.53 29.18 84.64L28.83 83.88Q31.98 83.65 34.2 83L34.73 83.69Q33.71 83.98 32.41 84.21ZM30.05 88.37Q29.67 86.41 29.27 85.3L30 85.03Q30.48 86.33 30.82 88.1ZM33 88.19Q33.63 86.55 34.01 84.7L34.84 84.98Q34.35 86.93 33.73 88.44ZM35.98 85.32Q38.15 84.8 39.97 83.88L40.46 84.56Q38.75 86.1 38.04 87.76Q37.61 88.75 37.61 89.68Q37.61 90.89 37.98 91.53Q38.62 92.61 40.14 92.61Q41.61 92.61 42.34 91.37Q42.91 90.4 42.91 88.72Q42.91 86.89 42.26 85.36L42.95 84.95Q43.6 86.19 44.46 87.13Q44.97 87.68 45.63 88.19L45.17 88.95Q43.94 87.84 43.19 86.45Q43.63 87.95 43.63 89.18Q43.63 91 42.98 92.02Q42.05 93.5 40.08 93.5Q38.29 93.5 37.4 92.21Q36.79 91.32 36.79 89.75Q36.79 88.8 37.27 87.68Q37.95 86.12 39.15 84.98Q37.8 85.7 36.26 86.17ZM44.08 85.63Q43.75 84.71 43.17 83.76L43.79 83.5Q44.38 84.41 44.71 85.34ZM45.32 85.12Q44.97 84.14 44.41 83.24L45.02 83Q45.59 83.82 45.93 84.81ZM51.78 87.04H54.63V84.07H55.47V87.86H51.78V92.42H54.98V89.55H55.81V94H54.98V93.25H47.83V94H46.98V89.55H47.83V92.42H50.96V87.86H47.32V84.07H48.16V87.04H50.96V83.01H51.78ZM57.99 83.74H58.84V90.27Q58.84 92.55 61.04 92.55Q61.99 92.55 62.75 91.9Q63.76 91.04 64.4 88.5L65.16 89.02Q64.63 91 63.91 91.98Q62.83 93.46 60.98 93.46Q59.17 93.46 58.44 92.21Q57.99 91.46 57.99 90.25ZM66.9 84.39H72.92L73.44 84.91Q72.66 87.09 71.39 88.99Q73.13 90.49 74.62 92.32L73.99 93.08Q72.58 91.29 70.91 89.67Q69.19 91.93 66.7 93.12L66.22 92.31Q68.7 91.2 70.35 88.99Q71.78 87.1 72.4 85.21H66.9ZM83.36 84.7 83.93 85.24Q83.25 88.73 81.64 90.68Q80.79 91.71 79.45 92.51Q78.47 93.11 77.32 93.46L76.89 92.65Q79.6 91.81 81.05 90.03Q79.71 88.68 78.29 87.76L78.78 87.11Q80.32 88.07 81.56 89.31Q82.66 87.47 82.98 85.52H79.19Q78.01 87.57 76.36 88.71L75.8 88.07Q76.68 87.5 77.39 86.67Q78.68 85.2 79.21 83.41L80.02 83.64L80 83.68Q79.78 84.29 79.6 84.7ZM86.41 89.31Q86.09 87.71 85.53 86.33L86.22 85.95Q86.77 87.19 87.17 88.97ZM88.73 88.81Q88.41 87.27 87.87 85.86L88.61 85.52Q89.09 86.71 89.49 88.5ZM87.31 92.6Q89.76 91.86 90.7 89.97Q91.44 88.49 91.72 85.62L92.51 85.87Q92.25 87.99 91.85 89.25Q91.28 91.05 90.15 92.04Q89.23 92.83 87.74 93.34ZM101.37 84.94 102 85.53Q101.44 88.98 99.9 90.82Q98.49 92.5 95.82 93.4L95.33 92.59Q97.93 91.79 99.31 90.08Q100.62 88.46 101.07 85.76H97.31Q96.31 87.49 94.86 88.59L94.26 87.93Q95.29 87.18 95.98 86.27Q96.87 85.11 97.37 83.52L98.18 83.77Q97.97 84.42 97.74 84.94Z' fill='#000' stroke='#000' stroke-width='0.12'/><path d='M46.66 108.97H52.45L52.95 109.54Q52.2 111.97 50.98 114.08Q52.65 115.74 54.09 117.77L53.48 118.62Q52.13 116.63 50.51 114.83Q48.86 117.34 46.47 118.67L46 117.76Q48.39 116.53 49.98 114.08Q51.35 111.98 51.95 109.88H46.66ZM55.97 108.14H56.8V117.73Q58.98 116.93 60.87 114.83Q62.09 113.48 62.79 111.85L63.32 112.84Q62.29 114.85 60.68 116.36Q58.82 118.1 56.53 118.96L55.97 118.25ZM65.35 114.43Q65.04 112.65 64.5 111.12L65.16 110.7Q65.69 112.07 66.08 114.06ZM67.58 113.87Q67.27 112.16 66.75 110.6L67.47 110.22Q67.93 111.55 68.31 113.53ZM66.21 118.09Q68.58 117.27 69.48 115.17Q70.19 113.52 70.46 110.33L71.22 110.61Q70.97 112.97 70.58 114.36Q70.03 116.36 68.94 117.46Q68.07 118.34 66.63 118.91ZM73.94 108H74.77V111.63Q77.86 112.84 79.63 113.99L79.22 114.93Q77.23 113.66 74.77 112.64V119H73.94ZM78.12 111.18Q77.8 110.12 77.24 109.08L77.84 108.77Q78.41 109.78 78.74 110.87ZM79.4 110.67Q79.04 109.51 78.52 108.56L79.1 108.29Q79.62 109.16 80 110.33Z' fill='#000' stroke='#000' stroke-width='0.12'/><path d='M110.64 130.68V137H109.82V131.74Q109.18 132.47 108.47 133.09L108 132.34Q109.82 130.79 111.06 128.42L111.74 128.87Q111.24 129.83 110.64 130.68ZM116.09 130.68V135.99Q116.09 136.53 115.83 136.74Q115.61 136.91 115.06 136.91Q114.14 136.91 113.31 136.85L113.15 135.94Q114.06 136.05 114.82 136.05Q115.1 136.05 115.17 135.96Q115.24 135.89 115.24 135.68V130.68H111.71V129.82H118V130.68ZM108.15 128.77Q109.7 127.64 110.66 126L111.34 126.48Q110.23 128.26 108.63 129.48ZM112.38 126.58H117.27V127.43H112.38Z' fill='#000' stroke='#000' stroke-width='0.12'/><path d='M124.64 148.68V155H123.82V149.74Q123.18 150.47 122.47 151.09L122 150.34Q123.82 148.79 125.06 146.42L125.74 146.87Q125.24 147.83 124.64 148.68ZM130.09 148.68V153.99Q130.09 154.53 129.83 154.74Q129.61 154.91 129.06 154.91Q128.14 154.91 127.31 154.85L127.15 153.94Q128.06 154.05 128.82 154.05Q129.1 154.05 129.17 153.96Q129.24 153.89 129.24 153.68V148.68H125.71V147.82H132V148.68ZM122.15 146.77Q123.7 145.64 124.66 144L125.34 144.48Q124.23 146.26 122.63 147.48ZM126.38 144.58H131.27V145.43H126.38Z' fill='#000' stroke='#000' stroke-width='0.12'/><path d='M97.64 166.68V173H96.82V167.74Q96.18 168.47 95.47 169.09L95 168.34Q96.82 166.79 98.06 164.42L98.74 164.87Q98.24 165.83 97.64 166.68ZM103.09 166.68V171.99Q103.09 172.53 102.83 172.74Q102.61 172.91 102.06 172.91Q101.14 172.91 100.31 172.85L100.15 171.94Q101.06 172.05 101.82 172.05Q102.1 172.05 102.17 171.96Q102.24 171.89 102.24 171.68V166.68H98.71V165.82H105V166.68ZM95.15 164.77Q96.7 163.64 97.66 162L98.34 162.48Q97.23 164.26 95.63 165.48ZM99.38 162.58H104.27V163.43H99.38Z' fill='#000' stroke='#000' stroke-width='0.12'/><path d='M171.64 184.68V191H170.82V185.74Q170.18 186.47 169.47 187.09L169 186.34Q170.82 184.79 172.06 182.42L172.74 182.87Q172.24 183.83 171.64 184.68ZM177.09 184.68V189.99Q177.09 190.53 176.83 190.74Q176.61 190.91 176.06 190.91Q175.14 190.91 174.31 190.85L174.15 189.94Q175.06 190.05 175.82 190.05Q176.1 190.05 176.17 189.96Q176.24 189.89 176.24 189.68V184.68H172.71V183.82H179V184.68ZM169.15 182.77Q170.7 181.64 171.66 180L172.34 180.48Q171.23 182.26 169.63 183.48ZM173.38 180.58H178.27V181.43H173.38Z' fill='#000' stroke='#000' stroke-width='0.12'/><path d='M402.82 90.84Q401.74 91.47 400.77 91.81L400.17 91.22Q402.77 90.38 404.11 88.91L404.97 89.12Q404.68 89.44 404.36 89.73H408.52L409.16 90.21Q408.09 91.29 406.59 92.15Q408.46 92.8 411.07 93.17L410.57 93.94Q407.52 93.4 405.71 92.6Q403.61 93.58 400.58 93.98L400.16 93.27Q402.67 93.01 404.81 92.17Q403.54 91.49 402.82 90.84ZM403.47 90.42Q404.33 91.12 405.7 91.78Q407.08 91.06 407.76 90.38H403.52Q403.5 90.4 403.47 90.42ZM405.91 85.06H410.89V85.75H407.29V88.29Q407.29 88.71 407.03 88.88Q406.81 89.01 406.29 89.01Q405.62 89.01 405.19 88.95L405.04 88.26Q405.69 88.35 406.13 88.35Q406.38 88.35 406.38 88.13V85.75H404.7Q404.7 87.2 404.26 87.94Q403.76 88.82 402.54 89.22L401.93 88.7Q403.09 88.28 403.47 87.57Q403.8 86.99 403.82 85.84L403.82 85.75H400.09V85.06H404.98V84H405.91ZM410.03 88.76Q409.24 87.69 408.08 86.62L408.76 86.19Q409.89 87.12 410.74 88.24ZM400 88.21Q401.17 87.38 401.81 86.23L402.61 86.5Q401.83 87.89 400.6 88.76ZM419.57 91.02Q418.67 89.61 418.25 88.12Q417.91 88.74 417.55 89.23L416.98 88.58Q418.18 86.93 418.76 84.06L419.64 84.2Q419.41 85.16 419.18 85.89H422.86V86.63H421.9L421.89 86.7Q421.62 89.17 420.58 91.03Q421.49 92.15 423 93.18L422.47 93.93Q421.11 93.02 420.17 91.83Q420.14 91.8 420.12 91.76Q419.09 93.13 417.62 94L417.04 93.38Q418.67 92.42 419.57 91.02ZM420.02 90.24Q420.78 88.67 421.02 86.63H418.92Q418.85 86.8 418.74 87.06Q419.1 88.73 420.02 90.24ZM416.86 90.43Q416.5 91.47 415.85 92.19Q416.52 92.49 417.14 92.78L416.61 93.45Q416.03 93.12 415.27 92.75Q415.24 92.77 415.19 92.81Q414.29 93.52 412.4 93.92L411.88 93.26Q413.52 92.97 414.44 92.38Q413.35 91.94 412.63 91.71L412.47 91.66L412.54 91.57Q412.88 91.13 413.3 90.43H411.74V89.78H413.65Q413.86 89.38 414.1 88.83L414.36 88.86V87.24Q413.49 88.31 412.15 89.01L411.62 88.45Q412.92 87.83 413.97 86.74H411.72V86.08H414.36V84H415.21V86.08H417.48V86.74H415.21V86.96Q416.32 87.39 417.09 87.82L416.59 88.48Q416 88.06 415.21 87.61V88.99H414.91L414.87 89.08Q414.75 89.37 414.56 89.78H417.77V90.43ZM415.92 90.43H414.23Q413.97 90.93 413.67 91.37Q414.29 91.56 415.04 91.85Q415.62 91.25 415.92 90.43ZM412.85 85.95Q412.54 85.15 412.14 84.52L412.84 84.24Q413.26 84.86 413.62 85.65ZM415.88 85.65Q416.31 85.02 416.62 84.22L417.39 84.5Q417.02 85.33 416.56 85.91Z' fill='#000' stroke='#000' stroke-width='0.12'/><path d='M391.23 117.52H396.73V122H395.81V121.37H390.7V122H389.8V118.21Q388.66 118.73 387.58 119.1L387 118.42Q388.59 117.96 390.03 117.29Q391.08 116.8 391.76 116.37Q390.96 115.69 389.83 114.97Q388.85 115.65 387.77 116.15L387.15 115.53Q390.14 114.33 391.61 112.07L392.51 112.27Q392.22 112.71 392.02 112.94H395.76L396.28 113.38Q394.78 115.25 392.76 116.62Q392.01 117.12 391.23 117.52ZM390.7 118.22V120.66H395.81V118.22ZM392.47 115.89Q394 114.79 394.92 113.65H391.39Q391.05 114.01 390.47 114.49Q391.54 115.12 392.47 115.89ZM401.55 113.56Q401.16 112.87 400.73 112.31L401.62 112.04Q402.09 112.65 402.52 113.56H404.73Q405.15 112.9 405.53 112L406.52 112.25Q406.16 112.93 405.7 113.56H409V114.26H398.21V113.56ZM403.32 115.21V121.1Q403.32 121.53 403.12 121.71Q402.92 121.87 402.38 121.87Q401.87 121.87 401.31 121.83L401.15 121.05Q401.71 121.14 402.2 121.14Q402.39 121.14 402.43 121.05Q402.47 120.99 402.47 120.84V119.24H400V122H399.15V115.21ZM400 115.88V116.9H402.47V115.88ZM400 117.54V118.6H402.47V117.54ZM404.72 115.45H405.58V119.89H404.72ZM407.17 114.98H408.06V121.05Q408.06 121.47 407.88 121.67Q407.66 121.93 406.98 121.93Q406.07 121.93 405.38 121.86L405.18 121.04Q406.14 121.16 406.77 121.16Q407.06 121.16 407.13 121.05Q407.17 120.98 407.17 120.83Z' fill='#000' stroke='#000' stroke-width='0.12'/><path d='M617.3 113.92H619.88V119.7H615.06V113.92H616.44Q616.51 113.57 616.61 112.98H613.26V112.23H616.71Q616.78 111.7 616.86 111.04L617.76 111.11Q617.67 111.77 617.6 112.23H620.8V112.98H617.48Q617.43 113.3 617.32 113.8ZM619.02 114.62H615.86V115.61H619.02ZM615.86 116.28V117.26H619.02V116.28ZM615.86 117.93V118.99H619.02V117.93ZM612.22 113.76V122H611.38V115.67Q610.93 116.54 610.4 117.33L610 116.42Q611.37 114.31 612.18 111L613.03 111.22Q612.61 112.74 612.22 113.76ZM614.04 120.64H621V121.4H614.04V122H613.2V114.98H614.04Z' fill='#000' stroke='#000' stroke-width='0.12'/><path d='M878 84.29H884.51L885.27 85.14Q885.15 87.93 884.56 89.63Q883.93 91.43 882.59 92.5Q881.52 93.35 879.7 93.89L879.29 92.97Q881.93 92.33 883.12 90.57Q884.34 88.77 884.41 85.24H878ZM885.07 84.59Q884.74 83.39 884.3 82.52L884.9 82.27Q885.34 83.1 885.69 84.29ZM886.33 84.29Q886.03 83.19 885.54 82.26L886.13 82.03Q886.63 82.93 886.94 83.99ZM888.07 82.95H888.89V92.65Q891.04 91.84 892.9 89.72Q894.1 88.36 894.79 86.7L895.31 87.71Q894.3 89.74 892.71 91.27Q890.88 93.03 888.62 93.9L888.07 93.18ZM896.24 87.67H904.67V88.67H896.24ZM912.61 84.41 913.21 85.07Q912.68 88.95 911.22 91.01Q909.88 92.9 907.34 93.91L906.88 93Q909.35 92.1 910.66 90.18Q911.9 88.36 912.33 85.33H908.76Q907.81 87.27 906.43 88.5L905.86 87.76Q906.84 86.91 907.5 85.9Q908.34 84.6 908.81 82.81L909.58 83.09Q909.38 83.82 909.16 84.41ZM918.46 82.72H919.24V85.25H922.97V86.17H919.24V94H918.46V86.17H914.81V85.25H918.46ZM914.57 92.3Q915.65 90.47 916.03 87.64L916.79 87.93Q916.34 91.14 915.25 93.02ZM922.52 92.82Q921.48 90.79 920.71 87.77L921.46 87.42Q922.1 89.96 923.24 92.17ZM922.67 82Q923 82 923.3 82.25Q923.82 82.7 923.82 83.51Q923.82 84.12 923.48 84.57Q923.14 85.02 922.66 85.02Q922.39 85.02 922.14 84.85Q921.87 84.67 921.7 84.34Q921.5 83.96 921.5 83.5Q921.5 83.13 921.65 82.78Q921.8 82.44 922.05 82.23Q922.33 82 922.67 82ZM922.66 82.65Q922.5 82.65 922.35 82.75Q922 83 922 83.51Q922 83.76 922.11 83.97Q922.3 84.37 922.67 84.37Q922.92 84.37 923.11 84.15Q923.33 83.89 923.33 83.51Q923.33 83.12 923.1 82.86Q922.91 82.65 922.66 82.65ZM928.05 93.86V87.15Q926.48 88.53 924.5 89.49L924.06 88.58Q926.19 87.64 927.8 86.15Q929.44 84.63 930.62 82.82L931.3 83.38Q930.21 84.97 928.85 86.38V93.86ZM935.7 85.96Q934.3 85.14 932.73 84.64L932.99 83.65Q934.87 84.23 935.98 84.97ZM932.81 92.51Q934.78 92.28 935.91 91.73Q938.85 90.3 939.61 85.15L940.29 85.78Q939.84 88.58 938.87 90.22Q937.82 92.02 935.99 92.83Q934.86 93.32 933.01 93.59ZM942.39 82.81H943.21V86.42Q946.28 87.66 948 88.8L947.59 89.77Q945.65 88.48 943.21 87.43V93.94H942.39Z' fill='#000' stroke='#000' stroke-width='0.12'/><path d='M917.91 115.68V122H917V116.74Q916.3 117.47 915.52 118.09L915 117.34Q917 115.79 918.37 113.42L919.11 113.87Q918.57 114.83 917.91 115.68ZM923.9 115.68V120.99Q923.9 121.53 923.61 121.74Q923.37 121.91 922.76 121.91Q921.75 121.91 920.84 121.85L920.66 120.94Q921.66 121.05 922.5 121.05Q922.81 121.05 922.89 120.96Q922.96 120.89 922.96 120.68V115.68H919.08V114.82H926V115.68ZM915.16 113.77Q916.87 112.64 917.93 111L918.68 111.48Q917.46 113.26 915.69 114.48ZM919.82 111.58H925.2V112.43H919.82Z' fill='#000' stroke='#000' stroke-width='0.12'/><path d='M995.64 112.45Q996.81 113.48 998.47 115.23Q999.65 112.7 1000.29 110.21L1001.04 110.73Q1000.3 113.35 999.09 115.91Q1000.5 117.46 1001.65 119.07L1001.1 119.97Q1000.19 118.62 998.65 116.8Q996.81 120.1 994.51 121.96L994 120.99Q996.11 119.41 998.01 116.1Q996.5 114.5 995.22 113.33ZM1004.5 115.89Q1003.91 113.38 1003.1 111.15L1003.8 110.64Q1004.61 112.69 1005.26 115.37ZM1004.72 120.86Q1007.44 119.52 1008.51 116.57Q1009.29 114.42 1009.59 110.4L1010.37 110.67Q1010.02 115.33 1009.02 117.65Q1007.83 120.42 1005.22 121.86ZM1012.88 117.01Q1012.57 115.07 1012.05 113.41L1012.7 112.94Q1013.21 114.44 1013.58 116.61ZM1015.03 116.41Q1014.73 114.54 1014.23 112.83L1014.92 112.42Q1015.36 113.87 1015.73 116.03ZM1013.71 121.01Q1015.99 120.11 1016.86 117.82Q1017.54 116.02 1017.8 112.54L1018.54 112.85Q1018.3 115.42 1017.92 116.94Q1017.39 119.12 1016.34 120.32Q1015.5 121.28 1014.11 121.9ZM1021.16 110H1021.96V113.96Q1024.94 115.28 1026.65 116.53L1026.25 117.56Q1024.33 116.17 1021.96 115.06V122H1021.16ZM1025.19 113.46Q1024.88 112.31 1024.34 111.18L1024.91 110.84Q1025.47 111.94 1025.79 113.13ZM1026.42 112.92Q1026.07 111.64 1025.57 110.62L1026.14 110.32Q1026.64 111.27 1027 112.54Z' fill='#000' stroke='#000' stroke-width='0.12'/><path d='M886.68 249.66V252.48Q886.68 252.72 886.81 252.79Q886.94 252.85 887.37 252.85Q887.88 252.85 888.03 252.8Q888.21 252.74 888.27 252.37Q888.36 251.85 888.38 250.96L889.21 251.32Q889.16 252.61 889.02 253.09Q888.87 253.6 888.33 253.7Q888 253.76 887.34 253.76Q886.34 253.76 886.07 253.57Q885.81 253.39 885.81 252.93V249.66H884.84Q884.78 251.44 884.04 252.45Q883.33 253.42 881.6 254L881.1 253.23Q882.77 252.67 883.36 251.83Q883.89 251.12 883.97 249.66H882.85V242.59H888.31V249.66ZM883.73 243.4V244.71H887.44V243.4ZM883.73 245.45V246.76H887.44V245.45ZM883.73 247.52V248.87H887.44V247.52ZM880.83 243.62V246.48H882.18V247.35H880.83V250.39Q881.73 250.06 882.49 249.7L882.58 250.55Q880.87 251.44 878.32 252.25L878 251.28Q878.96 251.03 879.93 250.71V247.35H878.39V246.48H879.93V243.62H878.24V242.74H882.33V243.62ZM893.29 243.68Q893.57 242.92 893.78 242L894.72 242.13Q894.49 243.06 894.27 243.68H900.83V244.56H893.93Q893.37 245.88 892.55 247.17V253.97H891.63V248.46Q891.06 249.2 890.31 249.94L889.73 249.12Q891.86 247.04 892.94 244.56H890.07V243.68ZM896.43 247.97V245.45H897.36V247.97H900.22V248.82H897.36V252.49H900.84V253.37H893.11V252.49H896.43V248.82H893.64V247.97ZM907.62 252.23Q908.98 251.85 909.83 251.07Q910.97 250.02 910.97 247.99Q910.97 246.66 910.38 245.65Q909.58 244.25 907.72 243.96Q907.33 248 906.14 250.5Q905.63 251.56 905.15 252.02Q904.63 252.52 904.07 252.52Q903.31 252.52 902.71 251.72Q902.38 251.3 902.17 250.66Q901.87 249.77 901.87 248.75Q901.87 246.99 902.79 245.55Q903.69 244.11 905.11 243.5Q906.08 243.09 907.19 243.09Q908.92 243.09 910.16 244.02Q911.24 244.84 911.69 246.2Q911.96 247.02 911.96 247.96Q911.96 251.98 908.11 253.09ZM906.87 243.93Q905.54 244.02 904.61 244.79Q903.2 245.94 902.89 247.79Q902.81 248.26 902.81 248.72Q902.81 250.17 903.39 250.98Q903.74 251.45 904.1 251.45Q904.51 251.45 904.93 250.79Q905.6 249.69 906.14 247.82Q906.6 246.25 906.87 243.93ZM919 244.2V245.47H922.26V246.25H919V247.4H922.86V248.18H919V249.41H924.11V250.23H919.26Q919.9 251.19 921.16 251.93Q922.32 252.63 923.99 252.99L923.48 253.88Q921.66 253.46 920.26 252.42Q919.2 251.63 918.62 250.61Q917.6 253.18 913.77 253.94L913.3 253.1Q916.95 252.5 917.9 250.23H913.06V249.41H918.1V248.18H914.33V247.4H918.1V246.25H914.92V245.47H918.1V244.2H914.49V245.8H913.59V243.4H918.1V242.04H919V243.4H923.56V245.8H922.66V244.2ZM927.57 247.2V253.98H926.65V248.34Q925.94 249.12 925.15 249.79L924.63 248.99Q926.66 247.33 928.04 244.79L928.79 245.26Q928.24 246.29 927.57 247.2ZM933.63 247.2V252.89Q933.63 253.47 933.34 253.7Q933.1 253.88 932.49 253.88Q931.46 253.88 930.54 253.81L930.36 252.84Q931.37 252.96 932.22 252.96Q932.54 252.96 932.62 252.87Q932.69 252.79 932.69 252.56V247.2H928.76V246.28H935.76V247.2ZM924.79 245.15Q926.53 243.94 927.6 242.19L928.35 242.71Q927.12 244.61 925.33 245.92ZM929.5 242.82H934.95V243.72H929.5ZM940.08 243.08V251.53H937.54V252.53H936.71V243.08ZM937.54 243.94V246.76H939.22V243.94ZM937.54 247.61V250.64H939.22V247.61ZM943.26 243.57V242.04H944.16V243.57H946.73V244.4H944.16V246.11H947.39V246.95H945.68V248.6H947.12V249.44H945.68V252.94Q945.68 253.58 945.33 253.8Q945.08 253.96 944.51 253.96Q943.8 253.96 943.27 253.88L943.09 252.96Q943.88 253.08 944.42 253.08Q944.67 253.08 944.74 252.97Q944.79 252.88 944.79 252.7V249.44H940.56V248.6H944.79V246.95H940.34V246.11H943.26V244.4H940.85V243.57ZM942.6 252.37Q941.97 251.14 941.29 250.26L942 249.76Q942.63 250.53 943.36 251.82ZM953.68 243.5H958.36V244.33H953.68V245.88H957.65V249.93H949.38V245.88H952.75V242.04H953.68ZM950.3 246.69V249.11H956.72V246.69ZM948.1 253.37Q948.94 252.36 949.48 250.73L950.32 251.1Q949.73 252.96 948.93 253.96ZM952.07 253.83Q951.88 252.36 951.59 251.29L952.44 251.07Q952.84 252.31 953.02 253.55ZM954.86 253.66Q954.51 252.28 954.01 251.21L954.82 250.88Q955.38 251.92 955.78 253.28ZM958.15 253.81Q957.56 252.47 956.56 250.94L957.31 250.5Q958.27 251.79 959 253.27Z' fill='#000' stroke='#000' stroke-width='0.12'/><path d='M883.94 380.99V382.16H887.19V382.88H883.94V383.94H887.8V384.66H883.94V385.79H889.05V386.55H884.2Q884.84 387.43 886.1 388.12Q887.26 388.76 888.93 389.1L888.42 389.92Q886.6 389.53 885.2 388.57Q884.14 387.84 883.56 386.9Q882.53 389.27 878.71 389.97L878.23 389.2Q881.89 388.64 882.84 386.55H878V385.79H883.04V384.66H879.27V383.94H883.04V382.88H879.85V382.16H883.04V380.99H879.43V382.47H878.52V380.26H883.04V379H883.94V380.26H888.5V382.47H887.6V380.99ZM892.51 383.76V390H891.59V384.81Q890.88 385.53 890.09 386.14L889.57 385.4Q891.6 383.87 892.98 381.53L893.74 381.97Q893.18 382.92 892.51 383.76ZM898.58 383.76V389Q898.58 389.54 898.29 389.75Q898.04 389.92 897.43 389.92Q896.41 389.92 895.48 389.85L895.3 388.95Q896.32 389.06 897.16 389.06Q897.48 389.06 897.56 388.98Q897.63 388.9 897.63 388.7V383.76H893.7V382.91H900.71V383.76ZM889.73 381.87Q891.47 380.76 892.54 379.14L893.29 379.62Q892.06 381.37 890.27 382.58ZM894.45 379.72H899.9V380.55H894.45ZM905.03 379.96V387.75H902.49V388.67H901.65V379.96ZM902.49 380.76V383.35H904.16V380.76ZM902.49 384.14V386.93H904.16V384.14ZM908.2 380.41V379H909.1V380.41H911.68V381.18H909.1V382.75H912.33V383.53H910.62V385.04H912.07V385.82H910.62V389.04Q910.62 389.63 910.27 389.84Q910.02 389.98 909.46 389.98Q908.74 389.98 908.21 389.92L908.04 389.07Q908.83 389.17 909.36 389.17Q909.62 389.17 909.69 389.07Q909.74 388.99 909.74 388.82V385.82H905.5V385.04H909.74V383.53H905.28V382.75H908.2V381.18H905.79V380.41ZM907.55 388.52Q906.91 387.39 906.24 386.58L906.95 386.12Q907.57 386.82 908.31 388.02ZM918.63 380.35H923.31V381.11H918.63V382.54H922.6V386.27H914.32V382.54H917.7V379H918.63ZM915.24 383.28V385.52H921.67V383.28ZM913.04 389.44Q913.89 388.51 914.43 387.01L915.27 387.35Q914.68 389.07 913.88 389.99ZM917.02 389.87Q916.82 388.51 916.53 387.53L917.39 387.32Q917.78 388.46 917.97 389.6ZM919.81 389.71Q919.45 388.44 918.95 387.45L919.77 387.15Q920.32 388.11 920.73 389.36ZM923.1 389.85Q922.51 388.61 921.51 387.21L922.26 386.8Q923.22 387.99 923.95 389.35ZM930.75 388.39Q932.1 388.04 932.96 387.32Q934.1 386.35 934.1 384.49Q934.1 383.26 933.51 382.33Q932.7 381.04 930.85 380.77Q930.46 384.49 929.26 386.79Q928.76 387.77 928.27 388.2Q927.76 388.66 927.19 388.66Q926.44 388.66 925.83 387.93Q925.5 387.54 925.29 386.94Q925 386.13 925 385.18Q925 383.56 925.91 382.23Q926.81 380.91 928.23 380.35Q929.2 379.97 930.31 379.97Q932.04 379.97 933.29 380.83Q934.37 381.58 934.81 382.83Q935.09 383.59 935.09 384.46Q935.09 388.16 931.23 389.19ZM929.99 380.75Q928.67 380.83 927.73 381.53Q926.32 382.6 926.01 384.3Q925.93 384.73 925.93 385.16Q925.93 386.49 926.52 387.24Q926.86 387.68 927.22 387.68Q927.64 387.68 928.05 387.06Q928.73 386.05 929.27 384.33Q929.72 382.88 929.99 380.75ZM944.53 381.63Q945.28 381.07 946.06 380.18L946.77 380.69Q946.07 381.4 945.19 382.04Q945.98 382.49 947.32 383.02L946.83 383.74Q945.29 383.08 944.19 382.34V383.02H939.34V382.49Q938.14 383.34 936.58 384.01L936.11 383.33Q937.58 382.8 938.78 382Q938.08 381.4 937.16 380.79L937.78 380.22Q938.58 380.75 939.43 381.5Q940.23 380.85 940.83 380.05H938.09V379.3H942.13Q942.67 380.03 943.24 380.61Q943.98 380.02 944.63 379.27L945.33 379.77Q944.6 380.49 943.76 381.07Q944.14 381.38 944.53 381.63ZM939.62 382.3H944.13Q942.79 381.37 941.75 380.12Q940.92 381.33 939.62 382.3ZM939.58 388.89Q939.2 387.85 938.76 387.09H937.83V384.09H945.58V387.09H944.56Q944.21 388.02 943.71 388.89H947.14V389.64H936.3V388.89ZM940.51 388.89H942.77Q943.17 388.16 943.55 387.09H939.78L939.83 387.2Q940.18 387.9 940.51 388.89ZM938.78 384.79V386.4H944.64V384.79ZM952.48 388.18 952.61 388.11Q953.58 387.54 954.6 386.72L954.85 387.41Q953.94 388.26 952.55 389.13L952.17 388.38L952.11 388.41Q950.44 389.14 948.15 389.79L947.82 388.94Q948.72 388.74 949.71 388.44L949.83 388.4V384.84H947.85V384.1H949.83V382.6H948.76Q948.53 382.89 948.13 383.3L947.74 382.54Q949 381.17 949.81 379H950.68L950.78 379.11Q951.9 380.32 952.61 381.39L952.03 382.02Q951.43 381.05 950.37 379.8Q949.9 380.93 949.3 381.86H951.89V382.6H950.64V384.1H952.36V384.84H950.64V388.15L950.74 388.11Q951.59 387.82 952.37 387.52ZM956.03 383.96Q956.04 384 956.06 384.08Q956.32 384.99 956.72 385.75Q957.52 385.02 958.11 384.24L958.77 384.81Q958.08 385.59 957.08 386.4Q957.81 387.52 959 388.45L958.45 389.23Q957.33 388.2 956.72 387.22Q956.33 386.59 956.02 385.8V389.14Q956.02 389.62 955.73 389.81Q955.49 389.96 954.97 389.96Q954.57 389.96 953.98 389.9L953.82 389.09Q954.45 389.17 954.89 389.17Q955.09 389.17 955.14 389.07Q955.17 389 955.17 388.86V383.96H952.32V383.2H956.36L956.43 382.01H953.27V381.31H956.47L956.53 380.17H952.93V379.44H957.43L957.2 383.2H958.81V383.96ZM948.62 388.04Q948.4 386.83 948.06 385.78L948.81 385.54Q949.18 386.6 949.36 387.77ZM950.94 387.36Q951.33 386.12 951.49 385.35L952.25 385.56Q952 386.62 951.6 387.55ZM953.99 386.42Q953.31 385.46 952.66 384.84L953.26 384.36Q953.93 384.95 954.64 385.87Z' fill='#000' stroke='#000' stroke-width='0.12'/><path d='M1175.92 388.65Q1176.54 389.29 1177.38 389.57Q1178.47 389.92 1179.9 389.92H1184.56Q1184.37 390.24 1184.25 390.73H1179.89Q1177.93 390.73 1176.83 390.23Q1176.12 389.91 1175.52 389.28Q1175.5 389.31 1175.32 389.5Q1174.45 390.39 1173.54 391L1173 390.17Q1173.99 389.61 1174.93 388.85L1174.98 388.81V385.77H1173.01V384.98H1175.92ZM1179.13 381.34Q1179.48 380.7 1179.74 380L1180.68 380.23Q1180.36 380.86 1180.03 381.34H1183.26V384.37H1178.16V385.66H1183.58V388.86H1177.23V381.34ZM1178.16 382.07V383.65H1182.33V382.07ZM1178.16 386.38V388.11H1182.65V386.38ZM1175.42 382.86Q1174.54 381.76 1173.55 380.88L1174.22 380.34Q1175.23 381.14 1176.14 382.22ZM1189.78 383.14H1188.21Q1188.03 385.78 1187.61 387.27Q1187.01 389.38 1185.71 390.69L1185.01 390.03Q1186.22 388.79 1186.77 386.81Q1187.15 385.44 1187.27 383.31L1187.28 383.14H1185.29V382.32H1187.34L1187.42 380.01H1188.34L1188.27 382.32H1190.69Q1190.67 388.3 1190.32 389.7Q1190.18 390.24 1189.81 390.44Q1189.53 390.6 1188.98 390.6Q1188.46 390.6 1187.66 390.5L1187.48 389.6Q1188.24 389.71 1188.79 389.71Q1189.16 389.71 1189.28 389.56Q1189.41 389.4 1189.51 388.68Q1189.73 386.94 1189.77 383.63ZM1196 381.72V390.58H1195.08V389.74H1192.7V390.63H1191.79V381.72ZM1192.7 382.54V388.92H1195.08V382.54Z' fill='#000' stroke='#000' stroke-width='0.12'/><path d='M1212.41 383.38H1214.79V390.04Q1214.79 390.53 1214.53 390.71Q1214.32 390.86 1213.81 390.86Q1213.16 390.86 1212.67 390.8L1212.5 389.94Q1213.18 390.05 1213.66 390.05Q1213.9 390.05 1213.95 389.94Q1213.98 389.87 1213.98 389.73V387.96H1210.06V391H1209.22V383.38H1211.55V380H1212.41ZM1210.06 384.13V385.29H1213.98V384.13ZM1210.06 386V387.24H1213.98V386ZM1210.06 383.07Q1209.69 381.89 1209 380.75L1209.76 380.37Q1210.39 381.41 1210.85 382.65ZM1213.12 382.83Q1213.76 381.55 1214.15 380.3L1214.97 380.58Q1214.46 382.05 1213.84 383.16ZM1215.93 380.91H1216.79V388.09H1215.93ZM1218.15 380.32H1219.02V389.88Q1219.02 390.47 1218.7 390.69Q1218.45 390.87 1217.87 390.87Q1217.11 390.87 1216.46 390.79L1216.26 389.9Q1217.18 390.01 1217.78 390.01Q1218.06 390.01 1218.11 389.88Q1218.15 389.79 1218.15 389.61ZM1225.06 383.5Q1224.5 384.01 1223.84 384.44L1223.34 383.73Q1225.41 382.54 1226.6 380.03H1227.55Q1228.21 381.17 1229.03 381.98Q1229.83 382.78 1231 383.48L1230.56 384.27Q1229.91 383.87 1229.3 383.37V384.02H1227.6V385.69H1230.76V386.46H1227.6V390.15Q1227.6 390.56 1227.44 390.75Q1227.25 390.97 1226.79 390.97Q1226.16 390.97 1225.46 390.89L1225.31 390.05Q1225.91 390.14 1226.46 390.14Q1226.68 390.14 1226.72 390.04Q1226.75 389.97 1226.75 389.83V386.46H1223.66V385.69H1226.75V384.02H1225.06ZM1225.31 383.26H1229.18Q1227.98 382.23 1227.1 380.85Q1226.4 382.17 1225.31 383.26ZM1220.45 380.5H1223.19L1223.65 380.92Q1223.05 382.99 1222.52 384.11Q1222.97 384.66 1223.23 385.39Q1223.52 386.22 1223.52 387.08Q1223.52 387.77 1223.37 388.12Q1223.14 388.67 1222.37 388.67Q1222.01 388.67 1221.68 388.61L1221.5 387.77Q1221.97 387.83 1222.25 387.83Q1222.58 387.83 1222.64 387.6Q1222.7 387.4 1222.7 386.94Q1222.7 385.44 1221.72 384.21Q1222.33 382.77 1222.69 381.29H1221.28V390.99H1220.45ZM1223.29 389.65Q1224.26 388.62 1224.77 387.12L1225.51 387.43Q1224.93 389.22 1223.94 390.27ZM1230.14 390.07Q1229.38 388.5 1228.61 387.44L1229.29 387.01Q1230.12 388.12 1230.86 389.51Z' fill='#000' stroke='#000' stroke-width='0.12'/><path d='M1247.44 382.3Q1246.31 381.56 1244.95 381.01L1245.18 380.1Q1246.58 380.57 1247.68 381.34ZM1246.48 385.55Q1245.48 384.93 1244 384.26L1244.28 383.31Q1245.64 383.83 1246.76 384.59ZM1244.6 389.55Q1246.47 389.33 1247.51 388.76Q1248.84 388.03 1249.68 386.41Q1250.48 384.9 1250.79 382.78L1251.46 383.34Q1250.87 386.88 1249.24 388.62Q1248.19 389.75 1246.64 390.22Q1245.89 390.46 1244.81 390.59ZM1250 382.11Q1249.7 381.09 1249.17 380.02L1249.73 379.72Q1250.26 380.75 1250.56 381.8ZM1251.2 381.62Q1250.86 380.45 1250.39 379.54L1250.93 379.26Q1251.41 380.13 1251.75 381.3ZM1255.39 381.74 1255.67 383.96 1259.15 383.19 1259.61 383.7Q1259.11 386.5 1257.82 388.11L1257.28 387.48Q1257.95 386.73 1258.37 385.69Q1258.67 384.95 1258.79 384.2L1255.79 384.87L1256.53 390.83L1255.84 391L1255.07 385.03L1253.15 385.46L1253.06 384.54L1254.96 384.11L1254.68 381.92ZM1264.03 382.94Q1262.72 382.11 1261.25 381.61L1261.49 380.62Q1263.25 381.2 1264.29 381.94ZM1261.32 389.5Q1263.17 389.27 1264.23 388.72Q1266.97 387.29 1267.68 382.12L1268.32 382.76Q1267.89 385.56 1267 387.2Q1266.01 389.01 1264.3 389.82Q1263.25 390.32 1261.51 390.59ZM1269.65 381.26H1275.57L1276.43 382.4Q1276.29 386.23 1275.06 388.18Q1274.29 389.4 1273.02 390.13Q1272.3 390.55 1271.24 390.89L1270.85 389.97Q1273.32 389.32 1274.44 387.56Q1275.58 385.76 1275.64 382.22H1269.65ZM1276.92 379Q1277.23 379 1277.51 379.25Q1278 379.71 1278 380.52Q1278 381.13 1277.68 381.58Q1277.36 382.03 1276.91 382.03Q1276.66 382.03 1276.43 381.86Q1276.17 381.68 1276.01 381.34Q1275.83 380.96 1275.83 380.5Q1275.83 380.13 1275.97 379.79Q1276.11 379.44 1276.34 379.24Q1276.6 379 1276.92 379ZM1276.91 379.66Q1276.75 379.66 1276.6 379.79Q1276.31 380.03 1276.31 380.52Q1276.31 380.84 1276.46 381.08Q1276.64 381.36 1276.92 381.36Q1277.07 381.36 1277.2 381.26Q1277.53 381.03 1277.53 380.52Q1277.53 380.15 1277.34 379.9Q1277.16 379.66 1276.91 379.66Z' fill='#000' stroke='#000' stroke-width='0.12'/><path d='M867.91 411.68V418H867V412.74Q866.3 413.47 865.52 414.09L865 413.34Q867 411.79 868.37 409.42L869.11 409.87Q868.57 410.83 867.91 411.68ZM873.9 411.68V416.99Q873.9 417.53 873.61 417.74Q873.37 417.91 872.76 417.91Q871.75 417.91 870.84 417.85L870.66 416.94Q871.66 417.05 872.5 417.05Q872.81 417.05 872.89 416.96Q872.96 416.89 872.96 416.68V411.68H869.08V410.82H876V411.68ZM865.16 409.77Q866.87 408.64 867.93 407L868.68 407.48Q867.46 409.26 865.69 410.48ZM869.82 407.58H875.2V408.43H869.82Z' fill='#000' stroke='#000' stroke-width='0.12'/><path d='M945.69 408.45Q946.9 409.48 948.6 411.23Q949.82 408.7 950.48 406.21L951.26 406.73Q950.49 409.35 949.25 411.91Q950.7 413.46 951.88 415.07L951.32 415.97Q950.38 414.62 948.79 412.8Q946.9 416.1 944.52 417.96L944 416.99Q946.17 415.41 948.13 412.1Q946.58 410.5 945.26 409.33ZM954.81 411.89Q954.21 409.38 953.37 407.15L954.1 406.64Q954.93 408.69 955.6 411.37ZM955.04 416.86Q957.84 415.52 958.95 412.57Q959.76 410.42 960.06 406.4L960.87 406.67Q960.5 411.33 959.47 413.65Q958.25 416.42 955.56 417.86ZM963.45 413.01Q963.14 411.07 962.6 409.41L963.27 408.94Q963.79 410.44 964.17 412.61ZM965.67 412.41Q965.36 410.54 964.84 408.83L965.55 408.42Q966.01 409.87 966.39 412.03ZM964.3 417.01Q966.66 416.11 967.55 413.82Q968.25 412.02 968.52 408.54L969.28 408.85Q969.03 411.42 968.65 412.94Q968.1 415.12 967.02 416.32Q966.15 417.28 964.72 417.9ZM971.98 406H972.81V409.96Q975.87 411.28 977.64 412.53L977.22 413.56Q975.25 412.17 972.81 411.06V418H971.98ZM976.14 409.46Q975.81 408.31 975.26 407.18L975.85 406.84Q976.42 407.94 976.75 409.13ZM977.4 408.92Q977.05 407.64 976.53 406.62L977.11 406.32Q977.63 407.27 978 408.54Z' fill='#000' stroke='#000' stroke-width='0.12'/></svg>
</body></html>
